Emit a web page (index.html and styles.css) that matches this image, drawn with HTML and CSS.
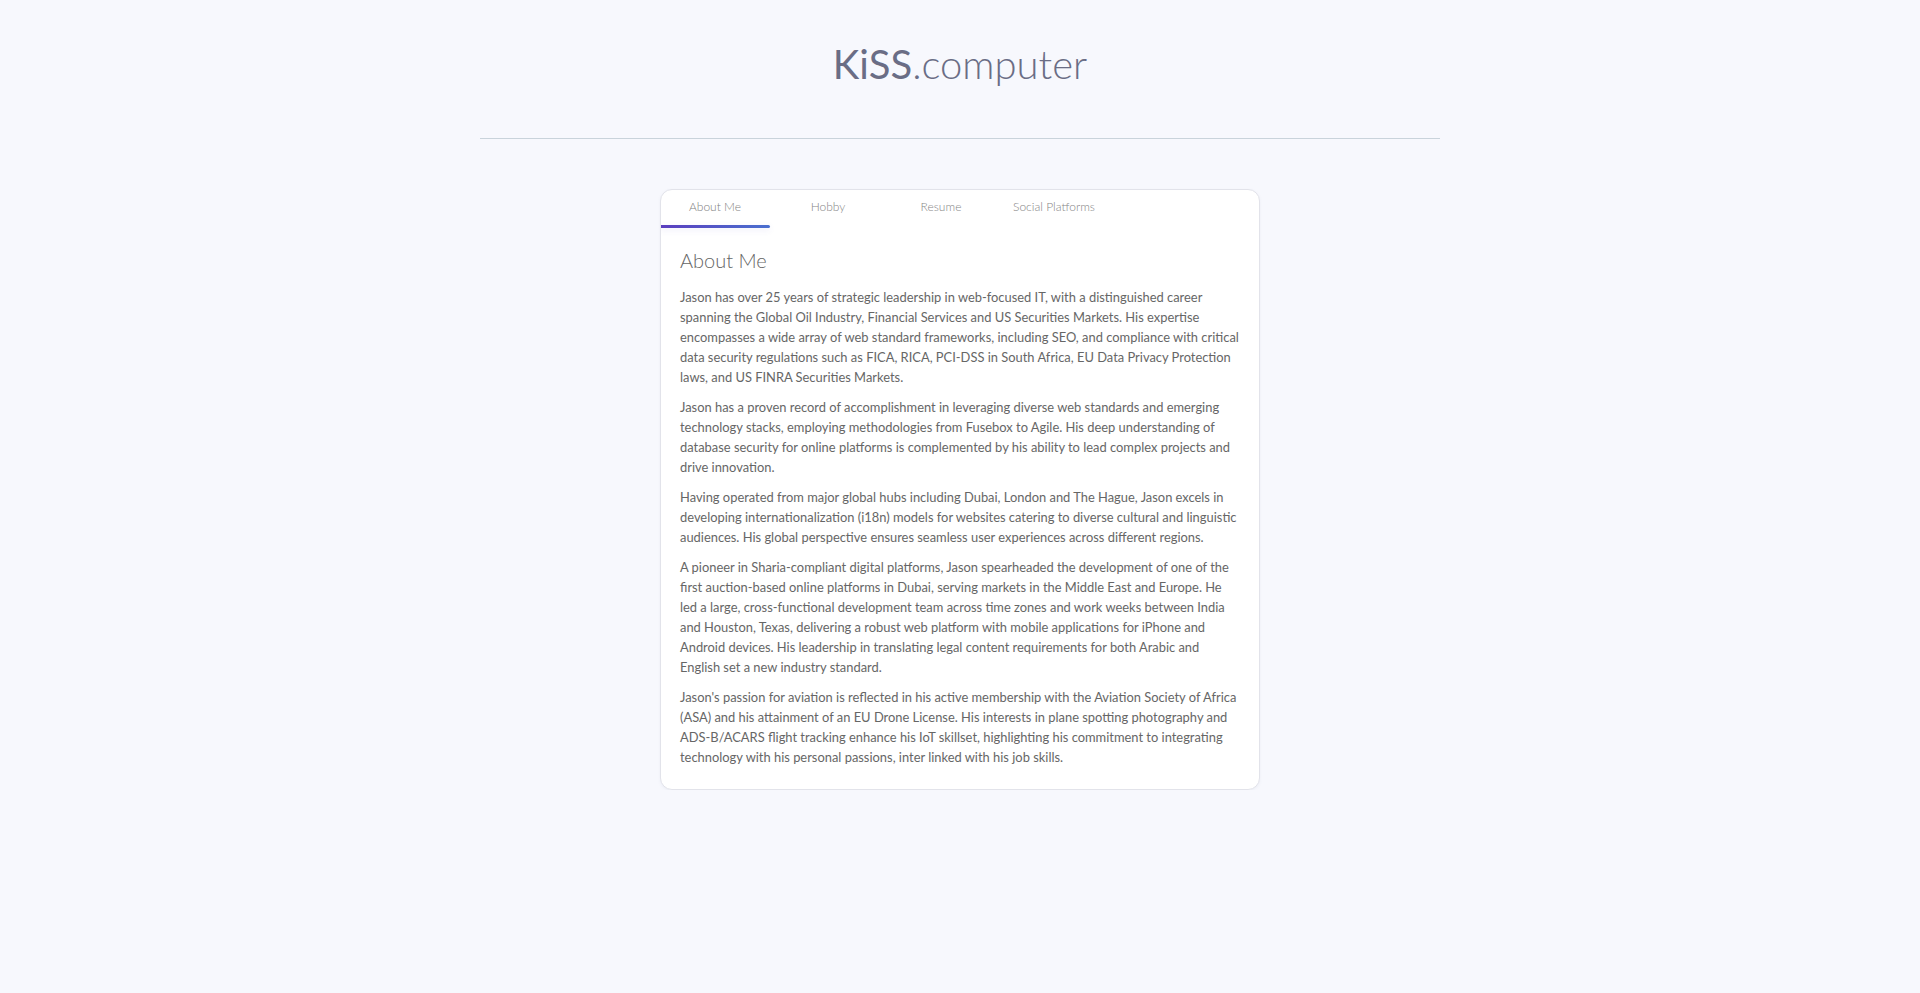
FILE: index.html
```html
<!DOCTYPE html>
<html lang="en">
<head>
<meta charset="utf-8">
<title>KiSS.computer</title>
<link rel="stylesheet" href="styles.css">
</head>
<body>
<header class="site-header">
  <h1 class="logo"><span class="logo-strong">KiSS</span><span class="logo-light">.computer</span></h1>
</header>
<main class="main">
  <section class="card">
    <nav class="tabs">
      <div class="tab active">About Me</div>
      <div class="tab">Hobby</div>
      <div class="tab">Resume</div>
      <div class="tab">Social Platforms</div>
    </nav>
    <div class="content">
      <h2 class="title">About Me</h2>
      <p>Jason has over 25 years of strategic leadership in web-focused IT, with a distinguished career spanning the Global Oil Industry, Financial Services and US Securities Markets. His expertise encompasses a wide array of web standard frameworks, including SEO, and compliance with critical data security regulations such as FICA, RICA, PCI-DSS in South Africa, EU Data Privacy Protection laws, and US FINRA Securities Markets.</p>
      <p>Jason has a proven record of accomplishment in leveraging diverse web standards and emerging technology stacks, employing methodologies from Fusebox to Agile. His deep understanding of database security for online platforms is complemented by his ability to lead complex projects and drive innovation.</p>
      <p>Having operated from major global hubs including Dubai, London and The Hague, Jason excels in developing internationalization (i18n) models for websites catering to diverse cultural and linguistic audiences. His global perspective ensures seamless user experiences across different regions.</p>
      <p>A pioneer in Sharia-compliant digital platforms, Jason spearheaded the development of one of the first auction-based online platforms in Dubai, serving markets in the Middle East and Europe. He led a large, cross-functional development team across time zones and work weeks between India and Houston, Texas, delivering a robust web platform with mobile applications for iPhone and Android devices. His leadership in translating legal content requirements for both Arabic and English set a new industry standard.</p>
      <p>Jason's passion for aviation is reflected in his active membership with the Aviation Society of Africa (ASA) and his attainment of an EU Drone License. His interests in plane spotting photography and ADS-B/ACARS flight tracking enhance his IoT skillset, highlighting his commitment to integrating technology with his personal passions, inter linked with his job skills.</p>
    </div>
  </section>
</main>
</body>
</html>
```
FILE: styles.css
```css
* { box-sizing: border-box; }
html, body {
  margin: 0;
  padding: 0;
  background: #f7f8fd;
  font-family: Lato, "Open Sans", "Liberation Sans", sans-serif;
  color: #666;
}
.site-header {
  width: 960px;
  margin: 0 auto;
  padding: 40px 0 50px;
  border-bottom: 1px solid #c9d3db;
  text-align: center;
}
.logo {
  margin: 0;
  font-size: 40px;
  line-height: 48px;
  font-weight: 400;
  color: #6a6d85;
  letter-spacing: 0;
}
.logo-strong { font-weight: 400; }
.logo-light { font-weight: 300; }
.main {
  display: flex;
  justify-content: center;
  padding-top: 50px;
}
.card {
  width: 600px;
  background: #fff;
  border: 1px solid #e2e3ea;
  border-radius: 12px;
  box-shadow: 0 1px 3px rgba(120, 125, 160, 0.08);
  overflow: hidden;
}
.tabs {
  display: flex;
  gap: 3px;
  margin-left: -1px;
}
.tab {
  width: 110px;
  display: flex;
  flex-direction: column;
  align-items: center;
  padding-top: 10px;
  font-size: 12px;
  line-height: 14px;
  font-weight: 300;
  color: #858585;
}
.tab::after {
  content: "";
  display: block;
  align-self: stretch;
  height: 3px;
  margin-top: 11px;
  border-radius: 2px;
}
.tab.active { color: #808080; }
.tab.active::after {
  background: linear-gradient(90deg, #5b3ebf, #4a70cf);
  box-shadow: 0 2px 6px rgba(90, 80, 200, 0.12);
}
.content {
  padding: 20px 19px 22px;
}
.title {
  margin: 0 0 15px;
  font-size: 20px;
  line-height: 24px;
  font-weight: 300;
  color: #666;
}
.content p {
  margin: 0 0 10px;
  font-size: 12.9px;
  line-height: 20px;
  color: #666;
}
.content p:last-child { margin-bottom: 0; }
```
